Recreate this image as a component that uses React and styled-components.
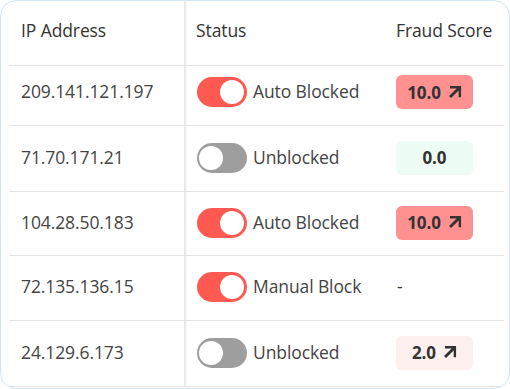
import React from "react";
import styled, { createGlobalStyle } from "styled-components";

const Global = createGlobalStyle`
  html, body { margin: 0; padding: 0; background: #ffffff; }
  body { font-family: "Open Sans", "Liberation Sans", Arial, sans-serif; }
  * { box-sizing: border-box; }
`;

const Card = styled.div`
  width: 510px;
  height: 389px;
  border: 1px solid #d3e6f4;
  border-radius: 16px;
  background: #fff;
  padding: 0 5px 2px 8px;
  overflow: hidden;
`;

const Row = styled.div`
  display: grid;
  grid-template-columns: 175px 200px 1fr;
  height: ${(p) => p.$h}px;
  padding-bottom: ${(p) => p.$lift || 0}px;
  border-bottom: 1px solid #e2e4e6;
`;

const Cell = styled.div`
  display: flex;
  align-items: center;
  padding: 0 0 ${(p) => (p.$head ? 6 : 4)}px 12px;
  font-size: 17.5px;
  letter-spacing: -0.1px;
  color: ${(p) => (p.$head ? "#333" : "#444")};
  position: relative;
  ${(p) =>
    p.$first &&
    `
    &::after {
      content: "";
      position: absolute;
      top: -1px;
      bottom: -${p.$lift ? p.$lift + 1 : 1}px;
      right: -3px;
      width: 3px;
      background: linear-gradient(to right, #e4e4e4, rgba(240,240,240,0.3));
    }
  `}
`;

const Toggle = styled.span`
  position: relative;
  flex: none;
  width: 50px;
  height: 30px;
  margin-top: 2px;
  margin-left: 1px;
  border-radius: 15px;
  background: ${(p) => (p.$on ? "#ff5a51" : "#9e9e9e")};
`;

const Knob = styled.span`
  position: absolute;
  top: 3px;
  left: ${(p) => (p.$on ? "23px" : "2px")};
  width: 24px;
  height: 24px;
  border-radius: 50%;
  background: #fff;
`;

const Label = styled.span`
  margin-left: 6px;
  color: #444;
`;

const Badge = styled.span`
  display: inline-flex;
  align-items: center;
  justify-content: center;
  gap: 8px;
  width: 77px;
  height: 34px;
  margin-top: 2px;
  border-radius: 6px;
  background: ${(p) => p.$bg};
  font-weight: 700;
  font-size: 17px;
  color: #333;
`;

const Dash = styled.span`
  color: #333;
  padding-left: 1px;
`;

const Arrow = () => (
  <svg width="13" height="13" viewBox="5 5 14 14" fill="#333">
    <path d="M6 5v2.6h7.2L5 15.8 7.2 18l8.2-8.2V17H18V5z" />
  </svg>
);

const data = [
  { ip: "209.141.121.197", on: true, status: "Auto Blocked", score: "10.0", bg: "#ff9191", up: true },
  { ip: "71.70.171.21", on: false, status: "Unblocked", score: "0.0", bg: "#edfcf5", up: false },
  { ip: "104.28.50.183", on: true, status: "Auto Blocked", score: "10.0", bg: "#ff9191", up: true },
  { ip: "72.135.136.15", on: true, status: "Manual Block", score: null },
  { ip: "24.129.6.173", on: false, status: "Unblocked", score: "2.0", bg: "#fff0f0", up: true },
];

const heights = [60, 66, 64, 65, 66];

export default function App() {
  return (
    <>
      <Global />
      <Card>
        <Row $h={65}>
          <Cell $head $first>IP Address</Cell>
          <Cell $head>Status</Cell>
          <Cell $head>Fraud Score</Cell>
        </Row>
        {data.map((d, i) => {
          const lift = i === 0 ? 5 : 0;
          return (
            <Row key={d.ip} $h={heights[i]} $lift={lift}>
              <Cell $first $lift={lift}>{d.ip}</Cell>
              <Cell>
                <Toggle $on={d.on}>
                  <Knob $on={d.on} />
                </Toggle>
                <Label>{d.status}</Label>
              </Cell>
              <Cell>
                {d.score ? (
                  <Badge $bg={d.bg}>
                    {d.score}
                    {d.up && <Arrow />}
                  </Badge>
                ) : (
                  <Dash>-</Dash>
                )}
              </Cell>
            </Row>
          );
        })}
      </Card>
    </>
  );
}
